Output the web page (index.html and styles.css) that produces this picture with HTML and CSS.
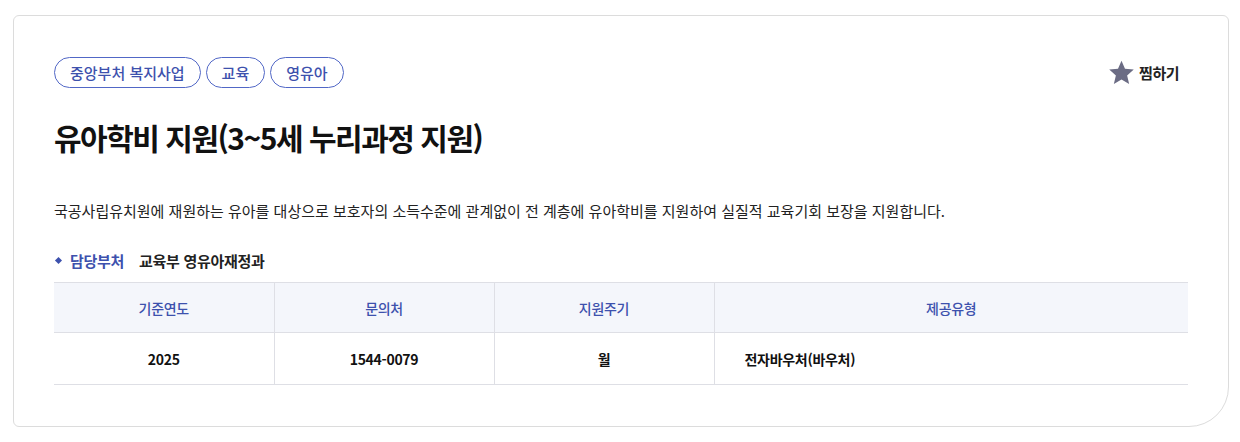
FILE: index.html
```html
<!DOCTYPE html>
<html lang="ko">
<head>
<meta charset="utf-8">
<link rel="stylesheet" href="styles.css">
</head>
<body>
<div class="card">
  <div class="top">
    <div class="tags">
      <span class="tag">중앙부처 복지사업</span>
      <span class="tag">교육</span>
      <span class="tag">영유아</span>
    </div>
    <button class="fav">
      <svg class="star" width="27" height="27" viewBox="0 0 24 24"><path d="M12 1.5l3.1 7.2 7.8.7-5.9 5.2 1.8 7.7L12 18.3l-6.8 4 1.8-7.7L1.1 9.4l7.8-.7z" fill="#6b6c84"/></svg>
      <span>찜하기</span>
    </button>
  </div>
  <h1 class="title">유아학비 지원(3~5세 누리과정 지원)</h1>
  <p class="desc">국공사립유치원에 재원하는 유아를 대상으로 보호자의 소득수준에 관계없이 전 계층에 유아학비를 지원하여 실질적 교육기회 보장을 지원합니다.</p>
  <div class="dept">
    <span class="bullet"></span>
    <span class="dept-label">담당부처</span>
    <span class="dept-value">교육부 영유아재정과</span>
  </div>
  <table class="info">
    <colgroup>
      <col class="c1"><col class="c2"><col class="c3"><col class="c4">
    </colgroup>
    <thead>
      <tr><th>기준연도</th><th>문의처</th><th>지원주기</th><th>제공유형</th></tr>
    </thead>
    <tbody>
      <tr><td>2025</td><td>1544-0079</td><td>월</td><td class="left">전자바우처(바우처)</td></tr>
    </tbody>
  </table>
</div>
</body>
</html>
```
FILE: styles.css
```css
html, body {
  margin: 0;
  padding: 0;
  background: #fff;
}
body {
  padding: 15px 11px 15px 13px;
  font-family: "Noto Sans CJK KR", "Noto Sans", sans-serif;
  color: #111;
}
.card {
  border: 1px solid #dcdcdc;
  border-radius: 6px 6px 40px 6px;
  padding: 41px 40px 41px 40px;
  height: 412px;
  box-sizing: border-box;
}
.top {
  display: flex;
  justify-content: space-between;
  align-items: center;
}
.tags {
  display: flex;
  gap: 5px;
}
.tag {
  display: inline-flex;
  align-items: center;
  height: 31px;
  box-sizing: border-box;
  padding: 0 15px;
  border: 1px solid #5167c6;
  border-radius: 16px;
  color: #3d51ad;
  font-size: 15px;
  font-weight: 500;
  letter-spacing: 0;
}
.fav {
  display: flex;
  align-items: center;
  gap: 4px;
  background: none;
  border: 0;
  padding: 0;
  margin-right: 9px;
  font-family: inherit;
  font-size: 15px;
  font-weight: 700;
  color: #222;
  letter-spacing: -0.5px;
}
.title {
  margin: 29px 0 0;
  font-size: 30px;
  line-height: 40px;
  font-weight: 700;
  letter-spacing: -1.5px;
  color: #111;
}
.desc {
  margin: 42px 0 0;
  font-size: 15px;
  line-height: 24px;
  color: #222;
  letter-spacing: 0;
}
.dept {
  display: flex;
  align-items: center;
  margin-top: 25px;
  height: 24px;
  font-size: 15px;
  letter-spacing: -0.3px;
}
.bullet {
  width: 5px;
  height: 5px;
  background: #3d51ad;
  transform: rotate(45deg);
  margin: 0 9px 0 2px;
}
.dept-label {
  color: #3d51ad;
  font-weight: 700;
  margin-right: 15px;
}
.dept-value {
  color: #222;
  font-weight: 700;
}
.info {
  margin-top: 10px;
  width: 100%;
  border-collapse: collapse;
  font-size: 14px;
  letter-spacing: -0.3px;
}
.c1, .c2, .c3 { width: 220px; }
.info th {
  height: 49px;
  background: #f4f6fb;
  color: #3d51ad;
  font-weight: 500;
  border-top: 1px solid #dedfe5;
  border-bottom: 1px solid #dedfe5;
  padding: 0;
}
.info td {
  height: 51px;
  text-align: center;
  font-weight: 700;
  color: #111;
  border-bottom: 1px solid #dedfe5;
  padding: 0;
}
.info th + th, .info td + td {
  border-left: 1px solid #dedfe5;
}
.info td.left {
  text-align: left;
  padding-left: 30px;
}
```
